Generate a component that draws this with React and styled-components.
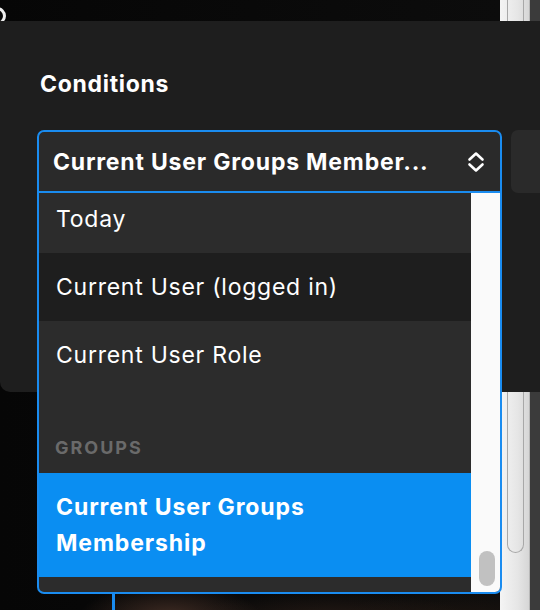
import React from 'react';
import styled, { createGlobalStyle } from 'styled-components';

const GlobalStyle = createGlobalStyle`
  html, body {
    margin: 0;
    padding: 0;
    background: #000;
  }
  body {
    font-family: Inter, "Noto Sans", "Liberation Sans", sans-serif;
    -webkit-font-smoothing: antialiased;
  }
`;

const BLUE = '#1a8cf0';

const Stage = styled.div`
  position: relative;
  width: 540px;
  height: 610px;
  overflow: hidden;
  background: #000;
`;

const Backdrop = styled.div`
  display: flex;
  height: 100%;
`;

const Scene = styled.div`
  position: relative;
  flex: 1;
  background:
    radial-gradient(ellipse 90px 30px at 170px 615px, #3d2a22 0%, rgba(45, 30, 24, 0) 100%),
    radial-gradient(ellipse 140px 26px at 330px 618px, #241914 0%, rgba(30, 20, 16, 0) 100%),
    radial-gradient(ellipse 120px 30px at 460px 620px, #1c140f 0%, rgba(20, 14, 10, 0) 100%),
    linear-gradient(90deg, #060606 0%, #0c0c0c 100%);

  &::before {
    content: '';
    position: absolute;
    left: 112px;
    top: 560px;
    width: 3px;
    height: 60px;
    background: ${BLUE};
  }

  &::after {
    content: '';
    position: absolute;
    left: -12px;
    top: 7px;
    width: 12px;
    height: 12px;
    border: 3px solid #eee;
    border-radius: 50%;
  }
`;

const Gutter = styled.div`
  width: 30px;
  display: flex;
  padding-left: 7px;
  box-sizing: border-box;
  background: linear-gradient(90deg, #f4f4f4 0%, #e6e6e6 60%, #d6d6d6 100%);
  border-right: 1px solid #b8b8b8;
`;

const TrackOutline = styled.div`
  width: 17px;
  height: 553px;
  box-sizing: border-box;
  border: 1px solid #a8a8a8;
  border-top: none;
  border-radius: 0 0 9px 9px;
`;

const Edge = styled.div`
  width: 10px;
  background: #3b3b3b;
`;

const Modal = styled.div`
  position: absolute;
  top: 21px;
  left: 0;
  right: 0;
  height: 371px;
  box-sizing: border-box;
  padding: 49px 0 0 37px;
  background: #1e1e1e;
  border-bottom-left-radius: 10px;
`;

const Title = styled.div`
  margin: 0 0 32px 3px;
  font-size: 23px;
  line-height: 28px;
  font-weight: 700;
  letter-spacing: 0.7px;
  color: #fff;
`;

const Row = styled.div`
  display: flex;
  gap: 9px;
`;

const Combo = styled.div`
  position: relative;
  width: 465px;
  flex: none;
`;

const Trigger = styled.div`
  display: flex;
  align-items: center;
  justify-content: space-between;
  height: 63px;
  box-sizing: border-box;
  padding: 0 15px 0 14px;
  background: #2a2a2a;
  border: 2px solid ${BLUE};
  border-radius: 7px 7px 0 0;
  color: #fff;
  font-size: 23px;
  font-weight: 700;
  letter-spacing: 0.8px;
`;

const TriggerText = styled.span`
  white-space: nowrap;
`;

const SideField = styled.div`
  flex: 1;
  height: 63px;
  background: #2a2a2a;
  border-radius: 7px 0 0 7px;
`;

const Listbox = styled.div`
  position: absolute;
  top: 100%;
  left: 0;
  right: 0;
  height: 401px;
  display: flex;
  box-sizing: border-box;
  border: 2px solid ${BLUE};
  border-top: none;
  border-radius: 0 0 7px 7px;
  overflow: hidden;
  background: #2c2c2c;
`;

const Options = styled.div`
  flex: 1;
  overflow: hidden;
`;

const OptionsInner = styled.div`
  margin-top: -8px;
`;

const Option = styled.div`
  min-height: 36px;
  padding: 16px 16px 16px 17px;
  font-size: 23px;
  line-height: 36px;
  letter-spacing: ${({ $selected }) => ($selected ? '0.9px' : '0.75px')};
  color: #fff;
  font-weight: ${({ $selected }) => ($selected ? 700 : 400)};
  background: ${({ $selected, $hover }) =>
    $selected ? '#0a8ef2' : $hover ? '#1e1e1e' : 'transparent'};
`;

const GroupLabel = styled.div`
  padding: 47px 16px 13px;
  font-size: 18px;
  line-height: 24px;
  font-weight: 700;
  letter-spacing: 2px;
  color: #6a6a6a;
`;

const ScrollTrack = styled.div`
  width: 29px;
  display: flex;
  flex-direction: column;
  justify-content: flex-end;
  padding: 0 5px 6px 8px;
  box-sizing: border-box;
  background: #fafafa;
`;

const Thumb = styled.div`
  height: 35px;
  border-radius: 8px;
  background: #c1c1c1;
`;

const ChevronsIcon = () => (
  <svg width="18" height="22" viewBox="0 0 18 22" fill="none">
    <path
      d="M2.5 8.5 L9 2.5 L15.5 8.5 M2.5 13.5 L9 19.5 L15.5 13.5"
      stroke="#fff"
      strokeWidth="2.6"
      strokeLinecap="round"
      strokeLinejoin="round"
    />
  </svg>
);

const options = [
  { label: 'Today' },
  { label: 'Current User (logged in)', hover: true },
  { label: 'Current User Role' },
];

export default function App() {
  return (
    <>
      <GlobalStyle />
      <Stage>
        <Backdrop>
          <Scene />
          <Gutter>
            <TrackOutline />
          </Gutter>
          <Edge />
        </Backdrop>
        <Modal>
          <Title>Conditions</Title>
          <Row>
            <Combo>
              <Trigger>
                <TriggerText>Current User Groups Member...</TriggerText>
                <ChevronsIcon />
              </Trigger>
              <Listbox>
                <Options>
                  <OptionsInner>
                    {options.map((o) => (
                      <Option key={o.label} $hover={o.hover}>
                        {o.label}
                      </Option>
                    ))}
                    <GroupLabel>GROUPS</GroupLabel>
                    <Option $selected>
                      Current User Groups
                      <br />
                      Membership
                    </Option>
                    <Option />
                  </OptionsInner>
                </Options>
                <ScrollTrack>
                  <Thumb />
                </ScrollTrack>
              </Listbox>
            </Combo>
            <SideField />
          </Row>
        </Modal>
      </Stage>
    </>
  );
}
